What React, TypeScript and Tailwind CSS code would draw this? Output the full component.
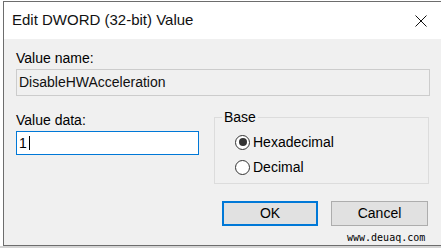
import { useState } from "react";

function Radio({ checked, label }: { checked: boolean; label: string }) {
  return (
    <div className="flex h-[20px] items-center">
      <span className="flex h-[15px] w-[15px] items-center justify-center rounded-full border-[1.5px] border-[#333333] bg-white">
        {checked ? <span className="h-[8px] w-[8px] rounded-full bg-[#333333]" /> : null}
      </span>
      <span className="ml-[3px]">{label}</span>
    </div>
  );
}

export default function App() {
  const [value] = useState("1");

  return (
    <div
      className="relative flex h-[248px] w-[441px] flex-col overflow-hidden bg-white text-[14px] text-black"
      style={{ fontFamily: '"Liberation Sans", Arial, sans-serif' }}
    >
      <div className="pl-[3px] pt-[1px]">
        <div className="flex h-[245px] flex-col border-b border-l border-t border-[#6d6d6d]">
          {/* title bar */}
          <div className="flex h-[37px] items-center justify-between bg-white pl-[8px] pr-[14px]">
            <span className="text-[15px] text-[#111]">Edit DWORD (32-bit) Value</span>
            <svg width="12" height="12" viewBox="0 0 12 12" className="mt-[1px]">
              <path d="M0.5 0.5 L11.5 11.5 M11.5 0.5 L0.5 11.5" stroke="#111" strokeWidth="1" fill="none" />
            </svg>
          </div>

          {/* body */}
          <div className="flex flex-1 flex-col bg-[#f0f0f0] pl-[12px] pr-[11px] pt-[11px]">
            <div className="leading-[16px]">Value name:</div>
            <div className="mt-[3px] flex h-[27px] items-center border border-[#cccccc] bg-[#f0f0f0] pl-[2px] text-[#111]">
              DisableHWAcceleration
            </div>

            <div className="mt-[13px] flex">
              <div className="w-[183px] pt-[3px]">
                <div className="leading-[16px]">Value data:</div>
                <div className="mt-[3px] flex h-[24px] items-center border border-[#0078d7] bg-white pl-[2px]">
                  <span>{value}</span>
                  <span className="ml-[2px] h-[14px] w-px bg-black" />
                </div>
              </div>

              <fieldset className="ml-[15px] mr-[1px] flex-1 border border-[#dcdcdc] pb-[6px]">
                <legend className="ml-[7px] px-[2px] leading-[16px]">Base</legend>
                <div className="mt-[7px] flex flex-col gap-[5px] pl-[20px]">
                  <Radio checked label="Hexadecimal" />
                  <Radio checked={false} label="Decimal" />
                </div>
              </fieldset>
            </div>

            <div className="mr-[2px] mt-[17px] flex justify-end gap-[13px]">
              <button
                type="button"
                className="h-[25px] w-[96px] border-2 border-[#0078d7] bg-[#e1e1e1]"
              >
                OK
              </button>
              <button
                type="button"
                className="h-[25px] w-[97px] border border-[#adadad] bg-[#e1e1e1]"
              >
                Cancel
              </button>
            </div>
          </div>
        </div>
      </div>
      <div className="flex-1 bg-[#d4d4d4]" />

      <span
        className="absolute left-[347px] top-[232px] text-[10px] leading-[12px] text-black"
        style={{ fontFamily: '"DejaVu Sans Mono", monospace' }}
      >
        www.deuaq.com
      </span>
    </div>
  );
}
